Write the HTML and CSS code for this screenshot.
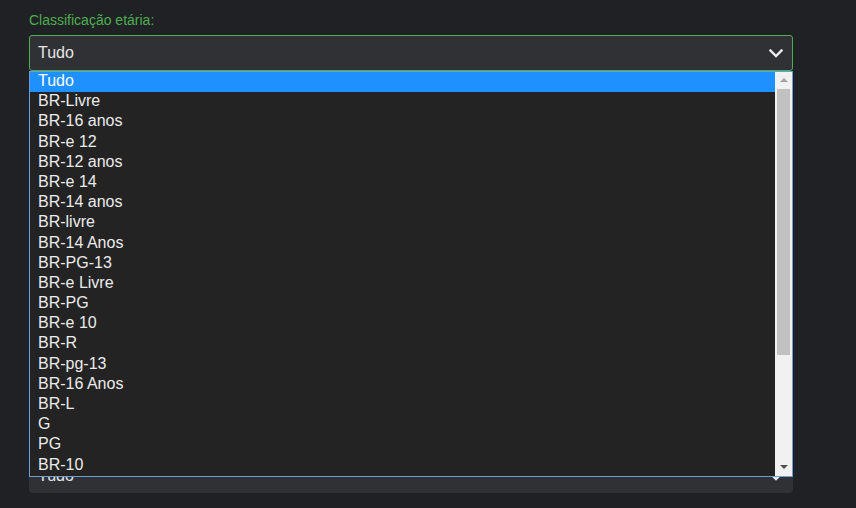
FILE: index.html
```html
<!DOCTYPE html>
<html lang="pt">
<head>
<meta charset="utf-8">
<link rel="stylesheet" href="styles.css">
</head>
<body>
<div class="page">
  <div class="field">
    <label class="label">Classificação etária:</label>
    <div class="select active">
      <span class="value">Tudo</span>
      <svg class="chev" width="14" height="9" viewBox="0 0 14 9"><polyline points="1.5,1.5 7,7 12.5,1.5" fill="none" stroke="#ececec" stroke-width="2.4" stroke-linecap="square"/></svg>
    </div>
    <div class="dropdown">
      <ul class="options">
        <li class="opt selected">Tudo</li>
        <li class="opt">BR-Livre</li>
        <li class="opt">BR-16 anos</li>
        <li class="opt">BR-e 12</li>
        <li class="opt">BR-12 anos</li>
        <li class="opt">BR-e 14</li>
        <li class="opt">BR-14 anos</li>
        <li class="opt">BR-livre</li>
        <li class="opt">BR-14 Anos</li>
        <li class="opt">BR-PG-13</li>
        <li class="opt">BR-e Livre</li>
        <li class="opt">BR-PG</li>
        <li class="opt">BR-e 10</li>
        <li class="opt">BR-R</li>
        <li class="opt">BR-pg-13</li>
        <li class="opt">BR-16 Anos</li>
        <li class="opt">BR-L</li>
        <li class="opt">G</li>
        <li class="opt">PG</li>
        <li class="opt">BR-10</li>
      </ul>
      <div class="scrollbar">
        <div class="arrow up"></div>
        <div class="track"><div class="thumb"></div></div>
        <div class="arrow down"></div>
      </div>
    </div>
  </div>
  <div class="field second">
    <div class="select">
      <span class="value">Tudo</span>
      <svg class="chev" width="14" height="9" viewBox="0 0 14 9"><polyline points="1.5,1.5 7,7 12.5,1.5" fill="none" stroke="#ececec" stroke-width="2.4" stroke-linecap="square"/></svg>
    </div>
  </div>
</div>
</body>
</html>
```

FILE: styles.css
```css
html, body {
  margin: 0;
  padding: 0;
  background: #202124;
  width: 856px;
  height: 508px;
  overflow: hidden;
}
.page {
  padding: 11px 0 0 29px;
  width: 764px;
  font-family: "Liberation Sans", Arial, sans-serif;
}
.field {
  position: relative;
  display: flex;
  flex-direction: column;
}
.label {
  color: #4caf50;
  font-size: 14px;
  line-height: 18px;
  margin-bottom: 6px;
}
.select {
  box-sizing: border-box;
  height: 36px;
  background: #303134;
  border: 1px solid transparent;
  border-radius: 4px;
  display: flex;
  align-items: center;
  justify-content: space-between;
  padding: 0 9px 0 8px;
  color: #e6e6e6;
  font-size: 16px;
}
.select.active {
  border-color: #4caf50;
  border-radius: 3px;
}
.value {
  line-height: 20px;
}
.chev {
  display: block;
  margin-top: 1px;
}
.dropdown {
  position: absolute;
  left: 0;
  top: 60px;
  box-sizing: border-box;
  width: 764px;
  height: 406px;
  background: #232323;
  border: 1px solid #6f9bd9;
  display: flex;
  z-index: 2;
}
.options {
  list-style: none;
  margin: 0;
  padding: 0;
  flex: 1;
  display: flex;
  flex-direction: column;
}
.opt {
  box-sizing: border-box;
  height: 20.2px;
  line-height: 18px;
  padding: 0 0 2px 8px;
  color: #ececec;
  font-size: 16px;
}
.opt.selected {
  background: #1e90ff;
  color: #ffffff;
}
.scrollbar {
  width: 17px;
  background: #f1f1f1;
  display: flex;
  flex-direction: column;
  align-items: center;
}
.arrow {
  width: 0;
  height: 0;
  border-left: 4px solid transparent;
  border-right: 4px solid transparent;
}
.arrow.up {
  margin-top: 6px;
  border-bottom: 4px solid #a3a3a3;
}
.arrow.down {
  margin-bottom: 7px;
  border-top: 4px solid #505050;
}
.track {
  flex: 1;
  width: 100%;
  display: flex;
  justify-content: center;
  padding-top: 7px;
}
.thumb {
  width: 13px;
  height: 266px;
  background: #c1c1c1;
}
.second {
  margin-top: 387px;
}
.second .select {
  height: 35px;
}
.second .value {
  padding-top: 1px;
}
```
